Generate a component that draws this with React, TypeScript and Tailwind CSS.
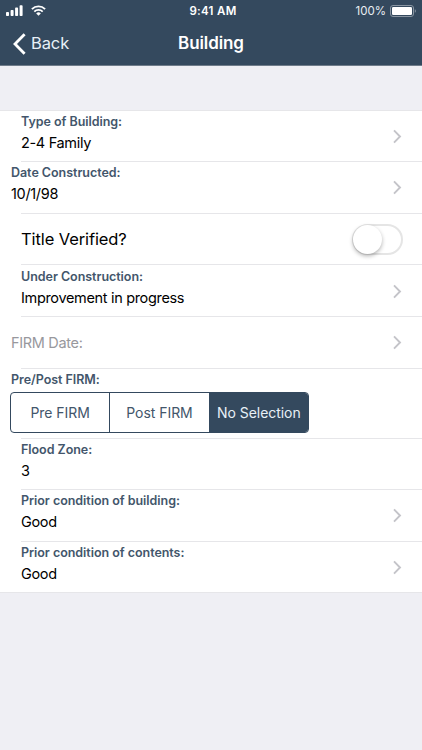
import React, { useState } from "react";
import clsx from "clsx";

type RowProps = {
  label: string;
  value: string;
  className?: string; // row height and left padding
  arrow?: boolean;
};

const firmOptions = ["Pre FIRM", "Post FIRM", "No Selection"];

function Chevron() {
  return (
    <svg width="9" height="15" viewBox="0 0 9 15" fill="none" className="shrink-0">
      <path d="M1 1.4L7 7.5L1 13.6" stroke="#c4c4c9" strokeWidth="1.9" />
    </svg>
  );
}

function Separator({ full }: { full?: boolean }) {
  return <div className={clsx("h-px shrink-0 bg-[#e6e6e9]", !full && "ml-[21px]")} />;
}

function Label({ children }: { children: React.ReactNode }) {
  return (
    <div className="text-[12.5px] leading-[16px] font-semibold tracking-[-0.04px] text-[#43566b]">
      {children}
    </div>
  );
}

// Row with a small title over its value
function Row({ label, value, className, arrow = true }: RowProps) {
  return (
    <div className={clsx("flex items-center justify-between pr-5", className)}>
      <div className="flex h-full flex-col pt-[3px]">
        <Label>{label}</Label>
        <div className="mt-[3px] text-[14.5px] leading-[20px] tracking-[-0.33px] text-black">{value}</div>
      </div>
      {arrow && <Chevron />}
    </div>
  );
}

function StatusBar() {
  return (
    <div className="grid h-[22px] grid-cols-3 items-center pr-[6px] pl-[6px] text-[11.5px] leading-none">
      <div className="-mt-px flex items-center gap-[8px]">
        <svg width="17" height="11" viewBox="0 0 17 11" fill="white">
          <rect x="0" y="7" width="3" height="4" rx="0.8" />
          <rect x="4.6" y="5" width="3" height="6" rx="0.8" />
          <rect x="9.1" y="2.6" width="3" height="8.4" rx="0.8" />
          <rect x="13.6" y="0.2" width="3" height="10.8" rx="0.8" />
        </svg>
        <svg width="15" height="11" viewBox="0 0 15 11" fill="none" stroke="white">
          <path d="M0.9 4.1a9.3 9.3 0 0 1 13.2 0" strokeWidth="1.9" />
          <path d="M3.3 6.6a5.9 5.9 0 0 1 8.4 0" strokeWidth="1.8" />
          <path d="M7.5 10.7L5.2 8.4a3.2 3.2 0 0 1 4.6 0z" fill="white" stroke="none" />
        </svg>
      </div>
      <div className="pt-[2px] pl-[4px] text-center font-semibold tracking-[0.3px]">9:41 AM</div>
      <div className="-mt-px flex items-center justify-end gap-[4px]">
        <span className="pt-[3px] text-[#e8edf2]">100%</span>
        <svg width="26" height="12" viewBox="0 0 26 12" fill="none">
          <rect x="0.5" y="0.5" width="23" height="11" rx="2.5" stroke="#8995a2" />
          <rect x="2" y="2" width="20" height="8" rx="1.2" fill="white" />
          <path d="M24.8 4.2c1.4 0.5 1.4 3.1 0 3.6z" fill="#8995a2" />
        </svg>
      </div>
    </div>
  );
}

export default function App() {
  const [verified, setVerified] = useState(false);
  const [firm, setFirm] = useState("No Selection");

  return (
    <div className="h-[750px] w-[422px] overflow-hidden bg-[#efeff4] font-['Inter',sans-serif]">
      <header className="h-[66px] border-b border-[#6f7c8a] bg-[#34495e] text-white">
        <StatusBar />
        <div className="grid h-[43px] grid-cols-3 items-center">
          <button className="flex items-center gap-[5px] pl-[13px] text-[16.5px] tracking-[-0.1px] text-[#e8f0f7]">
            <svg width="13" height="22" viewBox="0 0 13 22" fill="none">
              <path d="M11.6 1.2L2 11L11.6 20.8" stroke="white" strokeWidth="2.8" />
            </svg>
            Back
          </button>
          <h1 className="text-center text-[17px] font-semibold tracking-[-0.1px]">Building</h1>
        </div>
      </header>

      <main className="mt-[44px] bg-white">
        <Separator full />
        <Row className="h-[50px] pl-[21px]" label="Type of Building:" value="2-4 Family" />
        <Separator />
        <Row className="h-[51px] pl-[11px]" label="Date Constructed:" value="10/1/98" />
        <Separator />
        <div className="flex h-[50px] items-center justify-between pr-[19px] pl-[21px]">
          <span className="text-[16.5px] tracking-[-0.1px]">Title Verified?</span>
          <button
            onClick={() => setVerified(!verified)}
            className={clsx(
              "flex h-[31px] w-[51px] items-center rounded-full border-2 border-[#e5e5e5]",
              verified && "justify-end bg-[#34495e]"
            )}
          >
            <span className="-ml-px size-[29px] rounded-full bg-white shadow-[0_2px_4px_rgba(0,0,0,0.3)]" />
          </button>
        </div>
        <Separator />
        <Row className="h-[51px] pt-px pl-[21px]" label="Under Construction:" value="Improvement in progress" />
        <Separator />
        <div className="flex h-[51px] items-center justify-between pr-5 pl-[11px]">
          <span className="text-[14.5px] tracking-[-0.33px] text-[#98989d]">FIRM Date:</span>
          <Chevron />
        </div>
        <Separator />
        <div className="h-[69px] pt-[3px] pl-[11px]">
          <Label>Pre/Post FIRM:</Label>
          <div className="mt-[4px] -ml-px flex h-[41px] w-[299px] overflow-hidden rounded-[4px] border border-[#34495e]">
            {firmOptions.map((option) => (
              <button
                key={option}
                onClick={() => setFirm(option)}
                className={clsx(
                  "flex-1 border-r border-[#34495e] text-[14px] tracking-[-0.04px] whitespace-nowrap last:border-r-0",
                  firm === option ? "bg-[#34495e] text-[#e8f0f7]" : "text-[#43566b]"
                )}
              >
                {option}
              </button>
            ))}
          </div>
        </div>
        <Separator />
        <Row className="h-[50px] pl-[21px]" label="Flood Zone:" value="3" arrow={false} />
        <Separator />
        <Row className="h-[51px] pl-[21px]" label="Prior condition of building:" value="Good" />
        <Separator />
        <Row className="h-[50px] pl-[21px]" label="Prior condition of contents:" value="Good" />
        <Separator full />
      </main>
    </div>
  );
}
